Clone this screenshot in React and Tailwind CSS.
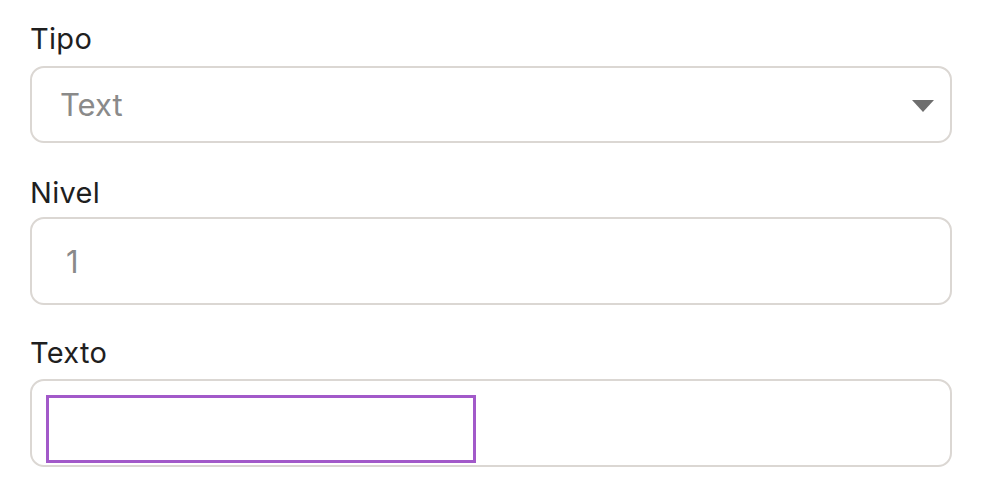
export default function App() {
  return (
    <div className="min-h-screen bg-white font-['Inter','Liberation_Sans',sans-serif]">
      <div className="w-[952px] pl-[30px] pt-[22px]">
        {/* Tipo */}
        <label className="block text-[29px] leading-[34px] text-[#1f1f1f] tracking-[0.3px]">Tipo</label>
        <div className="mt-[10px] h-[77px] rounded-[14px] border-2 border-[#dbd7d3] flex items-center justify-between pl-[28px] pr-[16px]">
          <span className="text-[31px] leading-none text-[#8a8a8a]">Text</span>
          <svg width="22" height="12" viewBox="0 0 22 12" className="mt-[2px]">
            <path d="M0 0 H22 L11 12 Z" fill="#6e6e6e" />
          </svg>
        </div>

        {/* Nivel */}
        <label className="block mt-[33px] text-[29px] leading-[34px] text-[#1f1f1f] tracking-[0.3px]">Nivel</label>
        <div className="mt-[7px] h-[88px] rounded-[14px] border-2 border-[#dbd7d3] flex items-center pl-[34px]">
          <span className="text-[31px] leading-none text-[#8a8a8a]">1</span>
        </div>

        {/* Texto */}
        <label className="block mt-[31px] text-[29px] leading-[34px] text-[#1f1f1f] tracking-[0.3px]">Texto</label>
        <div className="mt-[9px] h-[88px] rounded-[14px] border-2 border-[#dbd7d3] pl-[14px] pt-[14px]">
          <div className="w-[430px] h-[68px] border-[3px] border-[#a259c9]" />
        </div>
      </div>
    </div>
  );
}
